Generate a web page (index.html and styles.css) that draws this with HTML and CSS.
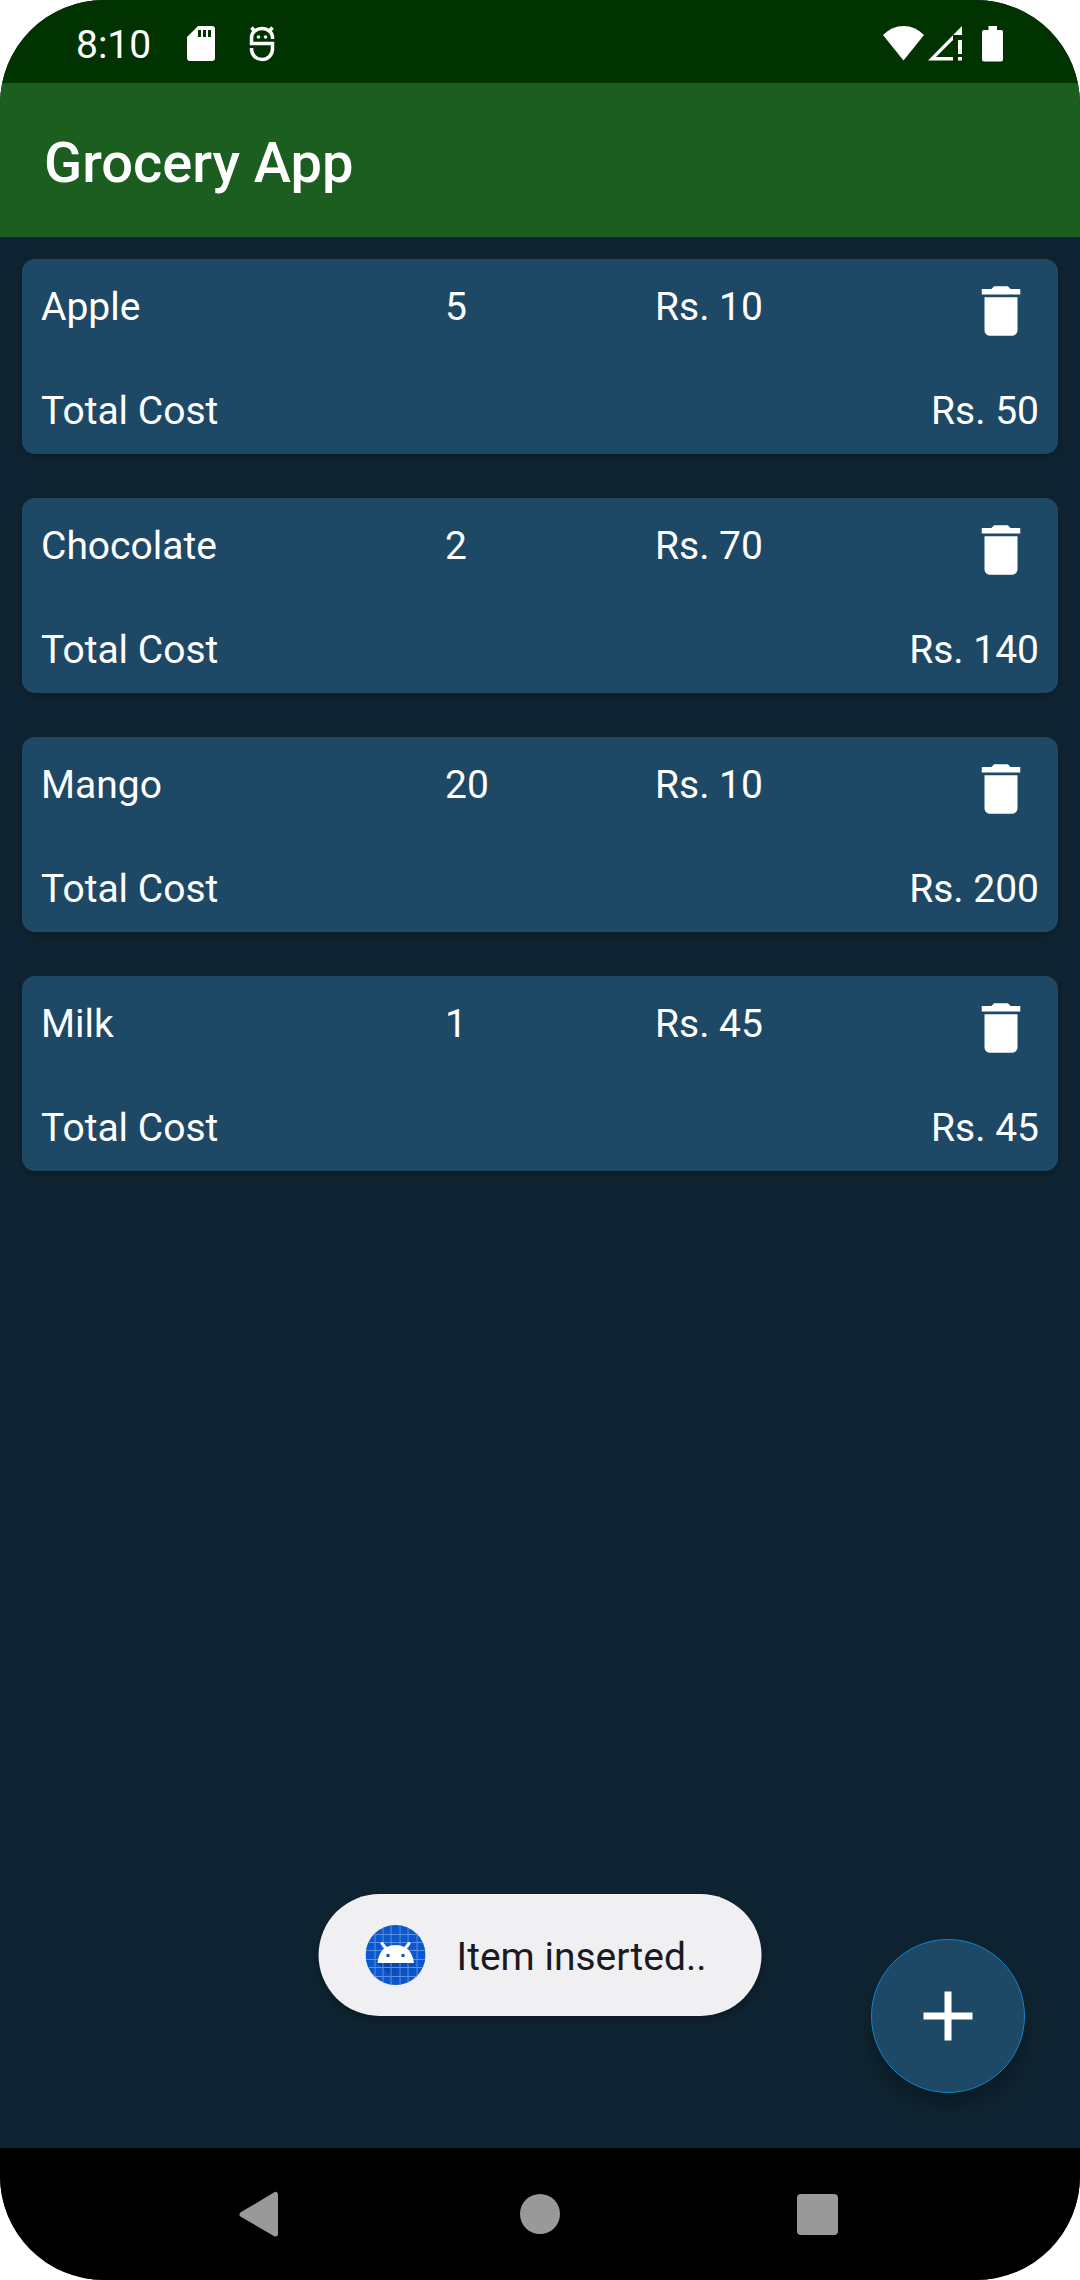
FILE: index.html
```html
<!DOCTYPE html>
<html lang="en">
<head>
<meta charset="utf-8">
<meta name="viewport" content="width=device-width, initial-scale=1">
<title>Grocery App</title>
<link rel="stylesheet" href="styles.css">
</head>
<body>
<svg class="sprite" aria-hidden="true">
  <symbol id="trash" viewBox="0 0 24 24"><path d="M6 19c0 1.100.9 2 2 2h8c1.100 0 2-.9 2-2V7H6v12zM19 4h-3.500l-1-1h-5l-1 1H5v2h14V4z"/></symbol>
</svg>
<div class="screen">
  <div class="status-bar">
    <div class="status-group">
      <time class="clock">8:10</time>
      <svg class="status-icon sd" viewBox="0 0 28 36" aria-hidden="true"><path fill-rule="evenodd" d="M11 0H25Q28 0 28 3V32Q28 35 25 35H3Q0 35 0 32V11ZM11 4V11H14V4ZM16 4V11H19V4ZM21 4V11H24V4Z"/></svg>
      <svg class="status-icon debug" viewBox="0 0 26 36" aria-hidden="true"><g fill="none" stroke="#fff" stroke-width="3.500"><path d="M23.500 13V11.500A10.500 9 0 0 0 2.500 11.500V17.500H23.500V23A10.500 10.500 0 0 1 2.500 23V22M5.500 5 2.500 1.500M20.500 5 23.500 1.500"/></g><circle cx="9.500" cy="11" r="1.800"/><circle cx="16.500" cy="11" r="1.800"/></svg>
    </div>
    <div class="status-group">
      <svg class="status-icon wifi" viewBox="0 0 42 36" aria-hidden="true"><path d="M0 9Q9 0 20.500 0T41 9L20.500 34.500Z"/></svg>
      <svg class="status-icon cell" viewBox="0 0 36 36" aria-hidden="true"><path fill-rule="evenodd" d="M34 0V9H25V34.500H0ZM25 14 8 31H25Z"/><path d="M30 14H34V28H30ZM30 31H34V34.500H30Z"/></svg>
      <svg class="status-icon battery" viewBox="0 0 22 36" aria-hidden="true"><path d="M6.500 0H15V4H19Q21 4 21 6V33.500Q21 35.500 19 35.500H2Q0 35.500 0 33.500V6Q0 4 2 4H6.500Z"/></svg>
    </div>
  </div>
  <header class="app-bar"><h1>Grocery App</h1></header>
  <main class="content">
    <ul class="items">
      <li class="card">
        <div class="item-row"><span>Apple</span><span>5</span><span>Rs. 10</span><button class="delete" type="button" aria-label="Delete Apple"><svg><use href="#trash"/></svg></button></div>
        <div class="total-row"><span>Total Cost</span><span>Rs. 50</span></div>
      </li>
      <li class="card">
        <div class="item-row"><span>Chocolate</span><span>2</span><span>Rs. 70</span><button class="delete" type="button" aria-label="Delete Chocolate"><svg><use href="#trash"/></svg></button></div>
        <div class="total-row"><span>Total Cost</span><span>Rs. 140</span></div>
      </li>
      <li class="card">
        <div class="item-row"><span>Mango</span><span>20</span><span>Rs. 10</span><button class="delete" type="button" aria-label="Delete Mango"><svg><use href="#trash"/></svg></button></div>
        <div class="total-row"><span>Total Cost</span><span>Rs. 200</span></div>
      </li>
      <li class="card">
        <div class="item-row"><span>Milk</span><span>1</span><span>Rs. 45</span><button class="delete" type="button" aria-label="Delete Milk"><svg><use href="#trash"/></svg></button></div>
        <div class="total-row"><span>Total Cost</span><span>Rs. 45</span></div>
      </li>
    </ul>
    <div class="toast" role="status">
      <svg class="toast-icon" viewBox="0 0 60 60" aria-hidden="true">
        <defs>
          <clipPath id="disc"><circle cx="30" cy="30" r="30"/></clipPath>
          <linearGradient id="shade" x1="0" y1="0" x2="1" y2="1"><stop offset="0" stop-opacity=".25"/><stop offset=".7" stop-opacity="0"/></linearGradient>
        </defs>
        <g clip-path="url(#disc)">
          <path fill="#0b57d0" d="M0 0H60V60H0Z"/>
          <path fill="url(#shade)" d="M12 38 34 60H60V50L48 38Z"/>
          <path stroke="#5d90e2" fill="none" d="M9.500 0V60M17.500 0V60M25.500 0V60M34.500 0V60M42.500 0V60M51.500 0V60M0 9.500H60M0 17.500H60M0 25.500H60M0 34.500H60M0 42.500H60M0 51.500H60"/>
        </g>
        <path fill="#fff" d="M12 38C13 26 20 20 30 20S47 26 48.500 38Z"/>
        <path stroke="#fff" stroke-width="3" stroke-linecap="round" d="M16.500 18.500 21 24M43.500 18.500 39 24"/>
        <circle cx="22.500" cy="30.500" r="1.800" fill="#0b57d0"/><circle cx="37.500" cy="30.500" r="1.800" fill="#0b57d0"/>
      </svg>
      <span class="toast-text">Item inserted..</span>
    </div>
    <button class="fab" type="button" aria-label="Add item"><svg viewBox="0 0 24 24"><path d="M19 13h-6v6h-2v-6H5v-2h6V5h2v6h6v2z"/></svg></button>
  </main>
  <nav class="nav-bar" aria-label="System navigation">
    <button type="button" aria-label="Back"><svg viewBox="0 0 46 46"><path stroke="#999" stroke-width="5" stroke-linejoin="round" d="M3 23.500 36.500 3.500V43Z"/></svg></button>
    <button type="button" aria-label="Home"><svg viewBox="0 0 46 46"><circle cx="23" cy="23" r="20"/></svg></button>
    <button type="button" aria-label="Recent apps"><svg viewBox="0 0 46 46"><rect x="2" y="3" width="41" height="41" rx="4"/></svg></button>
  </nav>
</div>
</body>
</html>
```

FILE: styles.css
```css
* { box-sizing: border-box; }

body {
  margin: 0;
  background: #fff;
  color: #fff;
  font-family: Roboto, sans-serif;
  font-size: 39px;
  line-height: 46px;
}

button {
  padding: 0;
  border: 0;
  background: none;
  cursor: pointer;
}

svg { display: block; fill: #fff; }

.sprite { display: none; }

.screen {
  display: flex;
  flex-direction: column;
  min-height: 100vh;
  overflow: hidden;
  border-radius: 104px;
  background: #0f2432;
}

.status-bar {
  display: flex;
  justify-content: space-between;
  height: 83px;
  padding: 0 76px;
  background: #030;
}

.status-group { display: flex; align-items: center; }

.clock { margin-right: 36px; padding-top: 6px; }

.status-icon { height: 36px; margin-top: 4px; }
.sd { width: 28px; margin-right: 34px; }
.debug { width: 26px; }
.wifi { width: 42px; margin-right: 3px; }
.cell { width: 36px; margin-right: 18px; }
.battery { width: 22px; }

.app-bar {
  display: flex;
  align-items: center;
  height: 154px;
  padding: 6px 44px 0;
  background: #1b5e20;
}

.app-bar h1 {
  margin: 0;
  font-size: 56px;
  font-weight: 500;
  line-height: 64px;
}

.content {
  position: relative;
  flex: 1;
  padding: 22px;
}

.items {
  display: flex;
  flex-direction: column;
  gap: 44px;
  margin: 0;
  padding: 0;
  list-style: none;
}

.card {
  display: flex;
  flex-direction: column;
  gap: 32px;
  padding: 19px 19px 20px;
  border-radius: 13px;
  background: #1d4966;
  box-shadow: 0 3px 12px rgba(0, 0, 0, 0.25);
}

.item-row {
  display: grid;
  grid-template-columns: 404fr 210fr 313fr 71fr;
  align-items: start;
  height: 78px;
}

.item-row span { padding-top: 6px; }

.delete,
.delete svg { width: 66px; height: 66px; }

.total-row { display: flex; justify-content: space-between; }

.toast {
  position: absolute;
  bottom: 132px;
  left: 50%;
  display: flex;
  align-items: center;
  gap: 31px;
  height: 122px;
  padding: 0 55px 0 47px;
  border-radius: 61px;
  background: #f0f0f2;
  box-shadow: 0 4px 12px rgba(0, 0, 0, 0.3);
  color: #1b1b1f;
  white-space: nowrap;
  transform: translateX(-50%);
}

.toast-icon { width: 60px; height: 60px; }
.toast-text { padding-top: 4px; }

.fab {
  position: absolute;
  right: 55px;
  bottom: 55px;
  display: grid;
  place-items: center;
  width: 154px;
  height: 154px;
  border: 1px solid #0f86cc;
  border-radius: 50%;
  background: #1d4966;
  box-shadow: 0 12px 24px rgba(0, 0, 0, 0.3);
}

.fab svg { width: 84px; height: 84px; }

.nav-bar {
  display: grid;
  grid-template-columns: repeat(3, 1fr);
  height: 132px;
  padding: 0 123px;
  background: #000;
}

.nav-bar button { display: grid; place-items: center; }
.nav-bar svg { width: 46px; height: 46px; fill: #999; }
```
